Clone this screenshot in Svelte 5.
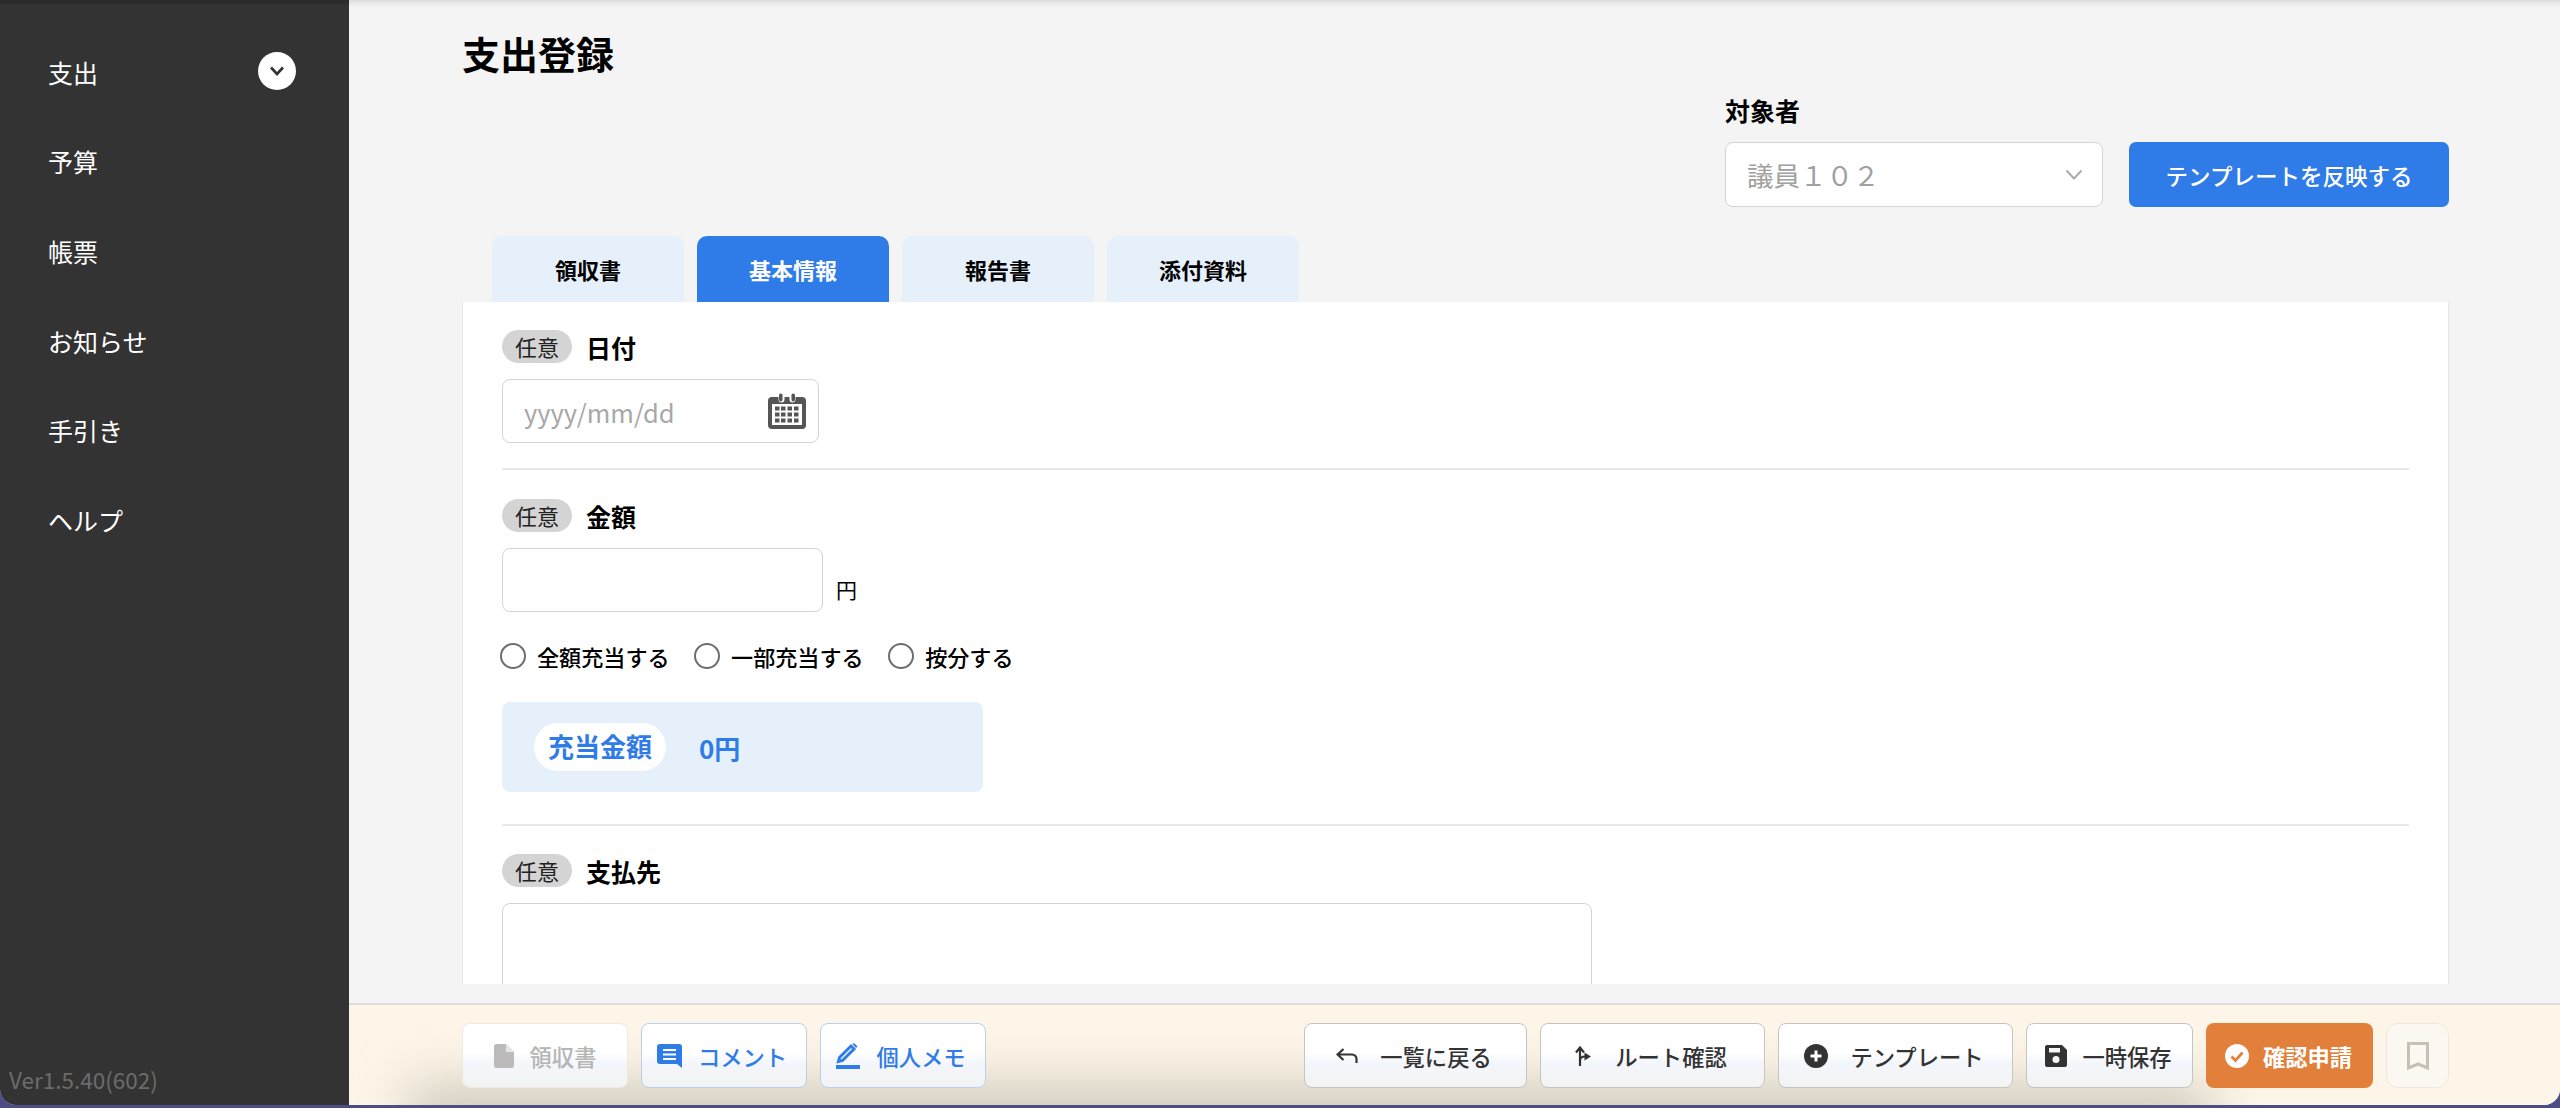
<script lang="ts">
  const navItems = ["支出", "予算", "帳票", "お知らせ", "手引き", "ヘルプ"];
  const tabs = ["領収書", "基本情報", "報告書", "添付資料"];
  const chargeOptions = ["全額充当する", "一部充当する", "按分する"];
  let activeTab = $state("基本情報");
  let chargeMode = $state("");
</script>

<div class="window">
  <div class="app">
    <aside class="sidebar">
      <nav class="nav">
        {#each navItems as item, i}
          <div class="nav-item">
            <span>{item}</span>
            {#if i === 0}
              <span class="nav-toggle">
                <svg width="18" height="12" viewBox="0 0 18 12"><path d="M3 2.5 9 9l6-6.500" fill="none" stroke="#333" stroke-width="2.600" /></svg>
              </span>
            {/if}
          </div>
        {/each}
      </nav>
      <div class="version">Ver1.5.40(602)</div>
    </aside>

    <div class="main">
      <div class="content">
        <h1>支出登録</h1>

        <div class="target">
          <div class="target-label">対象者</div>
          <div class="target-row">
            <div class="select">
              <span>議員１０２</span>
              <svg width="18" height="11" viewBox="0 0 18 11"><path d="M1.500 1.500 9 9.500l7.500-8" fill="none" stroke="#aaa" stroke-width="2" /></svg>
            </div>
            <button class="apply">テンプレートを反映する</button>
          </div>
        </div>

        <div class="tabs">
          {#each tabs as tab}
            <button class="tab" class:active={tab === activeTab} onclick={() => (activeTab = tab)}>{tab}</button>
          {/each}
        </div>

        <div class="card">
          <div class="field-label"><span class="badge">任意</span><span class="label-text">日付</span></div>
          <div class="date-input">
            <input type="text" placeholder="yyyy/mm/dd" />
            <svg width="38" height="36" viewBox="0 0 38 36">
              <path d="M4 4h6.500v2.500a3 3 0 0 0 6 0V4h5v2.500a3 3 0 0 0 6 0V4H34a4 4 0 0 1 4 4v24a4 4 0 0 1-4 4H4a4 4 0 0 1-4-4V8a4 4 0 0 1 4-4z" fill="#555" />
              <rect x="11" y="0.500" width="3.500" height="8" rx="1.700" fill="#555" />
              <rect x="23.500" y="0.500" width="3.500" height="8" rx="1.700" fill="#555" />
              <rect x="4" y="11" width="30" height="21" fill="#fff" />
              <g fill="#555">
                <rect x="7" y="13.500" width="4.500" height="4" /><rect x="13" y="13.500" width="4.500" height="4" /><rect x="19.500" y="13.500" width="4.500" height="4" /><rect x="26" y="13.500" width="4.500" height="4" />
                <rect x="7" y="19.500" width="4.500" height="4" /><rect x="13" y="19.500" width="4.500" height="4" /><rect x="19.500" y="19.500" width="4.500" height="4" /><rect x="26" y="19.500" width="4.500" height="4" />
                <rect x="7" y="25.500" width="4.500" height="4" /><rect x="13" y="25.500" width="4.500" height="4" /><rect x="19.500" y="25.500" width="4.500" height="4" /><rect x="26" y="25.500" width="4.500" height="4" />
              </g>
            </svg>
          </div>
          <hr class="rule-first" />

          <div class="field-label"><span class="badge">任意</span><span class="label-text">金額</span></div>
          <div class="amount-row">
            <input class="amount" type="text" />
            <span class="yen">円</span>
          </div>
          <div class="radios">
            {#each chargeOptions as option}
              <label class="radio">
                <input type="radio" name="charge" value={option} bind:group={chargeMode} />
                <span>{option}</span>
              </label>
            {/each}
          </div>
          <div class="charge-box">
            <span class="charge-pill">充当金額</span>
            <span class="charge-value">0円</span>
          </div>
          <hr class="rule-second" />

          <div class="field-label"><span class="badge">任意</span><span class="label-text">支払先</span></div>
          <textarea class="payee"></textarea>
        </div>
      </div>

      <footer class="footer">
        <div class="group">
          <button class="btn w-receipt disabled">
            <svg width="20" height="24" viewBox="0 0 20 24"><path d="M2.500 0H12l8 8v13.500a2.500 2.500 0 0 1-2.500 2.500h-15A2.500 2.500 0 0 1 0 21.500v-19A2.500 2.500 0 0 1 2.500 0z" fill="#bbb" /><path d="M12 0v8h8z" fill="#e4e4e4" /></svg>
            領収書
          </button>
          <button class="btn w-receipt blue">
            <svg width="25" height="24" viewBox="0 0 25 24"><path d="M3 0h19a3 3 0 0 1 3 3v21l-5-4H3a3 3 0 0 1-3-3V3a3 3 0 0 1 3-3z" fill="#2f7be8" /><path d="M6 6h13M6 10.500h13M6 15h13" stroke="#fff" stroke-width="2.200" /></svg>
            コメント
          </button>
          <button class="btn w-receipt blue">
            <svg width="24" height="26" viewBox="0 0 24 26"><path d="M3.500 14.500 15 3l3 3L6.500 17.500l-4 1z" fill="none" stroke="#2f7be8" stroke-width="3" /><path d="m16.500 1 1.500-1 3.500 3.500-1.500 1.500z" fill="#2f7be8" /><rect x="0" y="22" width="24" height="4" fill="#2f7be8" /></svg>
            個人メモ
          </button>
        </div>
        <div class="group">
          <button class="btn w-back">
            <svg width="22" height="15" viewBox="0 0 22 15"><path d="M7.500 1 1.500 6.500l6 5.500M2 6.500h14a4.500 4.500 0 0 1 4.500 4.500v4" fill="none" stroke="#333" stroke-width="2.200" /></svg>
            一覧に戻る
          </button>
          <button class="btn w-route">
            <svg width="16" height="20" viewBox="0 0 16 20"><path d="M5 20V2.500M1 6.500l4-5 4 5M5 15c0-3 2-4.500 5-4.500" fill="none" stroke="#333" stroke-width="2.200" /><path d="m9.500 6.500 6.500 4-6.500 4z" fill="#333" /></svg>
            ルート確認
          </button>
          <button class="btn w-template">
            <svg width="24" height="24" viewBox="0 0 24 24"><circle cx="12" cy="12" r="12" fill="#333" /><path d="M12 6.500v11M6.500 12h11" stroke="#fff" stroke-width="3" /></svg>
            テンプレート
          </button>
          <button class="btn w-save">
            <svg width="22" height="22" viewBox="0 0 22 22"><path d="M2 0h15l5 5v15a2 2 0 0 1-2 2H2a2 2 0 0 1-2-2V2a2 2 0 0 1 2-2z" fill="#333" /><rect x="4" y="3" width="11" height="4.500" fill="#f6f6f6" /><circle cx="11" cy="14.500" r="3.500" fill="#f6f6f6" /></svg>
            一時保存
          </button>
          <button class="btn w-submit orange">
            <svg width="24" height="24" viewBox="0 0 24 24"><circle cx="12" cy="12" r="12" fill="#fff" /><path d="m6.500 12.500 4 4 7-8" fill="none" stroke="#e27f3a" stroke-width="2.800" /></svg>
            確認申請
          </button>
          <button class="btn w-mark mark" aria-label="ブックマーク">
            <svg width="22" height="28" viewBox="0 0 22 28"><path d="M1.500 1.500h19v24.500L11 22 1.500 26z" fill="none" stroke="#c6c1b3" stroke-width="3" /></svg>
          </button>
        </div>
      </footer>
    </div>
  </div>
</div>

<style>
  :global(body) {
    margin: 0;
    background: #4d4d85;
  }

  * {
    box-sizing: border-box;
  }

  .window {
    width: 2560px;
    height: 1108px;
    padding-bottom: 3px;
    background: #4d4d85;
    font-family: "Noto Sans CJK JP", "Noto Sans", sans-serif;
    color: #000;
  }

  .app {
    display: flex;
    height: 100%;
    overflow: hidden;
    border-radius: 0 0 16px 16px;
    background: #f4f4f4;
  }

  .sidebar {
    flex: 0 0 349px;
    display: flex;
    flex-direction: column;
    background: linear-gradient(#2b2b2b 4px, #333 4px);
    color: #fff;
  }

  .nav {
    padding: 27px 53px 0 48px;
  }

  .nav-item {
    display: flex;
    align-items: center;
    justify-content: space-between;
    height: 89.600px;
    font-size: 25px;
  }

  .nav-toggle {
    display: flex;
    align-items: center;
    justify-content: center;
    width: 38px;
    height: 38px;
    margin-top: -1px;
    border-radius: 50%;
    background: #fff;
  }

  .version {
    margin-top: auto;
    padding: 0 0 13px 9px;
    font-size: 22.500px;
    line-height: 26px;
    color: #6c6c6c;
  }

  .main {
    flex: 1;
    display: flex;
    flex-direction: column;
    min-width: 0;
  }

  .content {
    flex: 1;
    display: flex;
    flex-direction: column;
    min-height: 0;
    padding: 28px 111px 19px 113px;
    background: linear-gradient(#dcdcdc, #f4f4f4 7px);
  }

  h1 {
    margin: 0;
    font-size: 38px;
    line-height: 50px;
    font-weight: 700;
  }

  .target {
    align-self: flex-end;
    width: 724px;
    margin-top: 17px;
  }

  .target-label {
    font-size: 25px;
    line-height: 30px;
    font-weight: 700;
  }

  .target-row {
    display: flex;
    gap: 26px;
    margin-top: 17px;
  }

  .select {
    display: flex;
    align-items: center;
    justify-content: space-between;
    width: 378px;
    height: 65px;
    padding: 0 19px 0 21px;
    border: 1.500px solid #d4d4d4;
    border-radius: 8px;
    background: #fff;
    font-size: 26.500px;
    color: #a0a0a0;
  }

  .apply {
    width: 320px;
    height: 65px;
    border: 0;
    border-radius: 7px;
    background: #2f7be8;
    color: #fff;
    font: 500 22.500px "Noto Sans CJK JP", sans-serif;
  }

  .tabs {
    display: flex;
    gap: 13px;
    margin: 29px 0 0 30px;
  }

  .tab {
    width: 192px;
    height: 66px;
    border: 0;
    border-radius: 10px 10px 0 0;
    background: #e6f0fb;
    color: #000;
    font: 700 22px "Noto Sans CJK JP", sans-serif;
  }

  .tab.active {
    background: #2f7be8;
    color: #fff;
  }

  .card {
    flex: 1;
    min-height: 0;
    overflow: hidden;
    padding: 28px 39px 0 39px;
    border-left: 1px solid #e6e6e6;
    border-right: 1px solid #e6e6e6;
    background: #fff;
  }

  .field-label {
    display: flex;
    align-items: center;
    gap: 14px;
    height: 33px;
  }

  .badge {
    width: 70px;
    height: 33px;
    border-radius: 17px;
    background: #d4d4d4;
    font-size: 22px;
    line-height: 32px;
    text-align: center;
    color: #222;
  }

  .label-text {
    font-size: 25px;
    font-weight: 700;
  }

  input[type="text"],
  textarea {
    border: 1.500px solid #d4d4d4;
    border-radius: 8px;
    background: #fff;
    outline: none;
    font-family: inherit;
  }

  .date-input {
    position: relative;
    display: flex;
    align-items: center;
    width: 317px;
    margin-top: 16px;
  }

  .date-input input {
    width: 100%;
    height: 64px;
    padding: 0 21px;
    font-size: 25.500px;
  }

  .date-input input::placeholder {
    color: #a8a8a8;
  }

  .date-input svg {
    position: absolute;
    right: 13px;
    top: 14px;
  }

  hr {
    height: 2px;
    margin: 0;
    border: 0;
    background: #e8e8e8;
  }

  .rule-first {
    margin: 25px 0 29px;
  }

  .rule-second {
    margin: 32px 0 28px;
  }

  .amount-row {
    display: flex;
    align-items: flex-end;
    gap: 13px;
    margin-top: 16px;
  }

  .amount {
    width: 321px;
    height: 64px;
  }

  .yen {
    margin-bottom: 8px;
    font-size: 21px;
    line-height: 30px;
  }

  .radios {
    display: flex;
    gap: 24.500px;
    margin: 31px 0 0 -2px;
  }

  .radio {
    display: flex;
    align-items: center;
    gap: 11px;
    font-size: 22.100px;
    font-weight: 500;
    line-height: 26px;
  }

  .radio input {
    appearance: none;
    width: 26px;
    height: 26px;
    margin: 0;
    border: 2.500px solid #6e6e6e;
    border-radius: 50%;
    background: #fff;
  }

  .charge-box {
    display: flex;
    align-items: center;
    width: 481px;
    height: 90px;
    margin-top: 33px;
    padding-left: 32px;
    border-radius: 8px;
    background: #e6f0fb;
    color: #2f7be8;
    font-size: 26px;
    font-weight: 700;
  }

  .charge-pill {
    width: 132px;
    height: 48px;
    border-radius: 24px;
    background: #fff;
    line-height: 46px;
    text-align: center;
  }

  .charge-value {
    margin-left: 33px;
  }

  .payee {
    display: block;
    width: 1090px;
    height: 200px;
    margin-top: 16px;
    resize: none;
  }

  .footer {
    position: relative;
    display: flex;
    flex: 0 0 102px;
    align-items: flex-start;
    justify-content: space-between;
    overflow: hidden;
    padding: 18px 111px 0 113px;
    border-top: 2px solid #ddd;
    background: #fdf5e8;
  }

  .footer::before {
    content: "";
    position: absolute;
    left: 60px;
    right: 350px;
    bottom: -45px;
    height: 65px;
    background: #cdc9bc;
    filter: blur(26px);
  }

  .group {
    position: relative;
    display: flex;
    gap: 13px;
  }

  .btn {
    display: flex;
    align-items: center;
    justify-content: center;
    gap: 16px;
    height: 65px;
    padding: 0 3px 0 0;
    border: 1.500px solid #c4c4c4;
    border-radius: 8px;
    background: linear-gradient(#fff 45%, #f3f6fb 62%, #f3f3f3);
    color: #333;
    font: 500 22.300px "Noto Sans CJK JP", sans-serif;
  }

  .w-receipt { width: 166px; }
  .w-back { width: 223px; gap: 22px; }
  .w-route { width: 225px; gap: 24px; }
  .w-template { width: 235px; gap: 22px; }
  .w-save { width: 167px; gap: 15px; padding-right: 2px; }
  .w-submit { width: 167px; gap: 14px; padding-right: 2px; }
  .w-mark { width: 63px; padding: 0; }

  .disabled {
    border-color: #eeeae2;
    color: #b5b5b5;
    padding: 0;
  }

  .blue {
    border-color: #b8d0f0;
    color: #2f7be8;
    padding-right: 4px;
  }

  .orange {
    border: 0;
    background: #e27f3a;
    color: #fff;
    font-weight: 700;
  }

  .mark {
    border-color: #eee9dd;
    border-radius: 12px;
    background: #fbf8f1;
  }
</style>
